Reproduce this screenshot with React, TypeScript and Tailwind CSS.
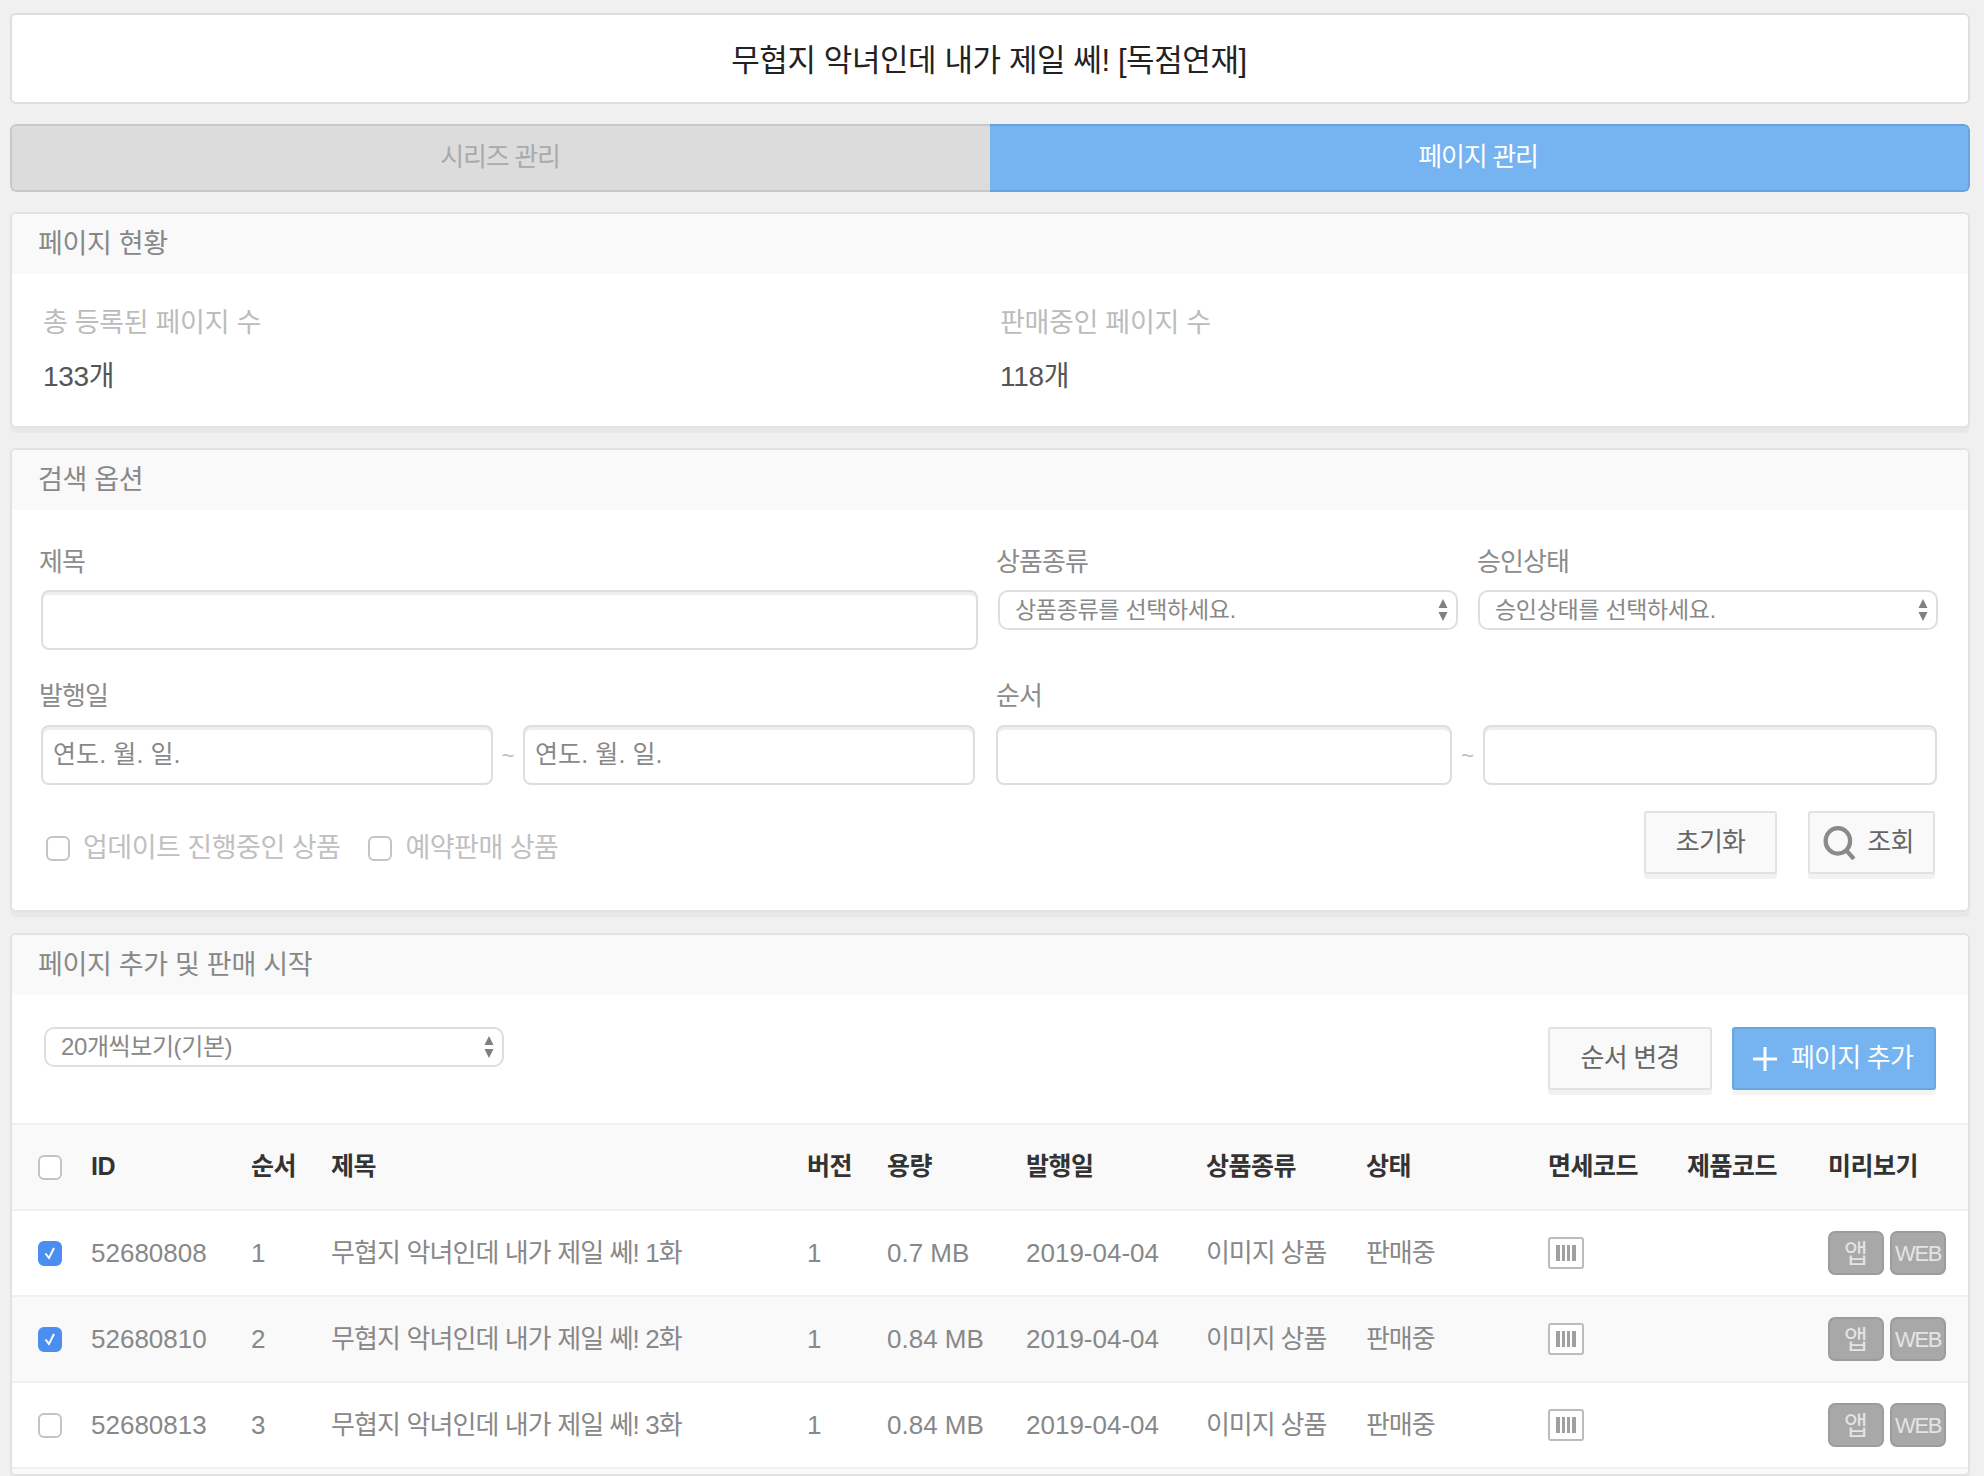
const rows = [
  { id: "52680808", order: "1", title: "무협지 악녀인데 내가 제일 쎄! 1화", size: "0.7 MB", checked: true },
  { id: "52680810", order: "2", title: "무협지 악녀인데 내가 제일 쎄! 2화", size: "0.84 MB", checked: true },
  { id: "52680813", order: "3", title: "무협지 악녀인데 내가 제일 쎄! 3화", size: "0.84 MB", checked: false },
];

const columns = ["ID", "순서", "제목", "버전", "용량", "발행일", "상품종류", "상태", "면세코드", "제품코드", "미리보기"];

function Checkbox({ checked = false, className = "" }: { checked?: boolean; className?: string }) {
  return (
    <span
      className={`flex h-[25px] w-[24px] shrink-0 items-center justify-center rounded-[6px] border-2 ${
        checked ? "border-[#4a8ef0] bg-[#4a8ef0]" : "border-[#c4c4c4] bg-white"
      } ${className}`}
    >
      {checked && (
        <svg viewBox="0 0 16 16" className="h-[16px] w-[16px]" fill="none" stroke="white" strokeWidth="2">
          <path d="M3.5 8.5 L7 13 L12 3" />
        </svg>
      )}
    </span>
  );
}

function Arrows() {
  return (
    <svg viewBox="0 0 10 24" className="absolute top-[8px] right-[9px] h-[24px] w-[12px]" fill="#808080">
      <path d="M5 1 L9.5 10 H0.5 Z" />
      <path d="M5 23 L9.5 14 H0.5 Z" />
    </svg>
  );
}

function SelectBox({ label, className = "", textClass = "text-[23px] tracking-[-0.3px]" }: { label: string; className?: string; textClass?: string }) {
  return (
    <div className={`relative ${className}`}>
      <select className={`h-[40px] w-full appearance-none rounded-[10px] border-2 border-[#dedede] bg-white pl-[15px] leading-[34px] text-[#888888] outline-none ${textClass}`}>
        <option>{label}</option>
      </select>
      <Arrows />
    </div>
  );
}

function TextInput({ value = "", className = "" }: { value?: string; className?: string }) {
  return (
    <input
      readOnly
      value={value}
      className={`h-[60px] rounded-[8px] border-2 border-[#dedede] bg-white px-[10px] pb-[6px] text-[25px] tracking-[0.1px] text-[#888888] shadow-[inset_0_3px_0_#eeeeee] outline-none ${className}`}
    />
  );
}

function Tilde({ className = "" }: { className?: string }) {
  return <span className={`flex items-center justify-center text-[22px] text-[#bbbbbb] ${className}`}>~</span>;
}

function Panel({ title, children, className = "" }: { title: string; children: React.ReactNode; className?: string }) {
  return (
    <section className={`rounded-[6px] border-2 border-[#e2e2e2] bg-white shadow-[0_5px_0_#e8e8e8] ${className}`}>
      <h2 className="flex h-[60px] items-center rounded-t-[6px] bg-[#f9f9f9] pt-[1px] pl-[26px] text-[27px] tracking-[-0.3px] text-[#888888]">
        {title}
      </h2>
      {children}
    </section>
  );
}

function Chip({ children, textClass }: { children: React.ReactNode; textClass: string }) {
  return (
    <span className={`flex h-[44px] w-[56px] items-center justify-center rounded-[7px] border-2 border-[#9c9c9c] bg-[#a8a8a8] text-[#e4e4e4] ${textClass}`}>
      {children}
    </span>
  );
}

function BarcodeIcon() {
  return (
    <span className="flex h-[32px] w-[36px] items-center justify-center rounded-[3px] border-2 border-[#bcbcbc] bg-white">
      <svg viewBox="0 0 20 16" className="h-[16px] w-[20px]" fill="#a0a0a0">
        <rect x="0" width="4" height="16" />
        <rect x="6" width="3" height="16" />
        <rect x="11" width="3" height="16" />
        <rect x="16" width="4" height="16" />
      </svg>
    </span>
  );
}

const fieldLabel = "h-[40px] pt-[1px] text-[26px] leading-[40px] tracking-[-0.9px] text-[#8c8c8c]";
const statLabel = "h-[40px] pt-[1px] text-[27px] leading-[40px] tracking-[-0.3px] text-[#bcbcbc]";
const statValue = "mt-[15px] h-[40px] text-[28px] leading-[40px] tracking-[-0.3px] text-[#555555]";

export default function App() {
  return (
    <div className="flex h-screen flex-col overflow-hidden bg-[#f0f0f0] pt-[13px] pr-[14px] pl-[10px] font-['Liberation_Sans','Noto_Sans_CJK_KR',sans-serif]">
      <header className="flex h-[91px] shrink-0 items-center justify-center rounded-[6px] border-2 border-[#dedede] bg-white pt-[5px] pr-[2px] text-[31px] tracking-[-0.4px] text-[#222222]">
        무협지 악녀인데 내가 제일 쎄! [독점연재]
      </header>

      {/* Tabs */}
      <nav className="mt-[20px] flex h-[68px] shrink-0 overflow-hidden rounded-[6px] text-[26px] tracking-[-1.2px]">
        <div className="flex w-[980px] items-center justify-center rounded-l-[6px] border-2 border-r-0 border-[#c8c8c8] bg-[#dcdcdc] pr-[2px] pb-[2px] text-[#aaaaaa]">
          시리즈 관리
        </div>
        <div className="flex flex-1 items-center justify-center rounded-r-[6px] border-2 border-l-0 border-[#68a3e0] bg-[#76b3f1] pr-[2px] pb-[2px] text-white">
          페이지 관리
        </div>
      </nav>

      {/* 페이지 현황 */}
      <Panel title="페이지 현황" className="mt-[20px] h-[216px] shrink-0">
        <div className="flex pt-[28px] pl-[31px]">
          <div className="w-[957px]">
            <div className={statLabel}>총 등록된 페이지 수</div>
            <div className={statValue}>133개</div>
          </div>
          <div>
            <div className={statLabel}>판매중인 페이지 수</div>
            <div className={statValue}>118개</div>
          </div>
        </div>
      </Panel>

      {/* 검색 옵션 */}
      <Panel title="검색 옵션" className="mt-[20px] h-[464px] shrink-0">
        <div className="pt-[31px] pr-[31px] pl-[29px]">
          <div className="flex gap-[18px]">
            <div className="w-[937px]">
              <div className={`-ml-[2px] ${fieldLabel}`}>제목</div>
              <TextInput className="mt-[9px] w-full" />
            </div>
            <div className="flex flex-1 gap-[21px]">
              <div className="flex-1">
                <div className={fieldLabel}>상품종류</div>
                <SelectBox label="상품종류를 선택하세요." className="mt-[9px] mr-[-2px] ml-[2px]" />
              </div>
              <div className="flex-1">
                <div className={fieldLabel}>승인상태</div>
                <SelectBox label="승인상태를 선택하세요." className="mt-[9px] mr-[-1px] ml-[1px]" />
              </div>
            </div>
          </div>

          <div className="mt-[25px] flex gap-[21px]">
            <div className="w-[934px]">
              <div className={`-ml-[2px] ${fieldLabel}`}>발행일</div>
              <div className="mt-[10px] flex">
                <TextInput value="연도. 월. 일." className="w-[452px]" />
                <Tilde className="w-[30px]" />
                <TextInput value="연도. 월. 일." className="w-[452px]" />
              </div>
            </div>
            <div className="flex-1">
              <div className={fieldLabel}>순서</div>
              <div className="mt-[10px] flex">
                <TextInput className="w-[456px]" />
                <Tilde className="w-[31px]" />
                <TextInput className="w-[454px]" />
              </div>
            </div>
          </div>

          <div className="mt-[26px] flex items-start justify-between">
            <div className="mt-[17px] ml-[5px] flex items-center text-[27px] tracking-[-0.5px] text-[#c0c0c0]">
              <Checkbox className="mt-[1px]" />
              <span className="ml-[13px]">업데이트 진행중인 상품</span>
              <Checkbox className="mt-[1px] ml-[28px]" />
              <span className="ml-[13px]">예약판매 상품</span>
            </div>
            <div className="mr-[2px] flex gap-[31px] text-[26px] tracking-[-0.7px] text-[#666666]">
              <button className="h-[63px] w-[133px] rounded-[3px] border-2 border-[#e2e2e2] bg-[#f9f9f9] shadow-[0_5px_0_#f2f2f2]">
                초기화
              </button>
              <button className="flex h-[63px] w-[127px] items-center justify-center gap-[10px] rounded-[3px] border-2 border-[#e2e2e2] bg-[#f9f9f9] pr-[6px] shadow-[0_5px_0_#f2f2f2]">
                <svg viewBox="0 0 32 32" className="h-[34px] w-[34px]" fill="none" stroke="#8a8a8a" strokeWidth="4">
                  <ellipse cx="14" cy="14" rx="11.5" ry="12" />
                  <path d="M22 23 L29 31" />
                </svg>
                조회
              </button>
            </div>
          </div>
        </div>
      </Panel>

      {/* 페이지 추가 및 판매 시작 */}
      <Panel title="페이지 추가 및 판매 시작" className="mt-[21px] min-h-0 flex-1 overflow-hidden">
        <div className="flex h-[128px] items-start justify-between pt-[32px] pr-[32px] pl-[32px]">
          <SelectBox label="20개씩보기(기본)" className="w-[460px]" textClass="text-[24px] tracking-[-0.4px]" />
          <div className="flex gap-[20px] text-[26px] tracking-[-0.8px]">
            <button className="h-[63px] w-[164px] rounded-[3px] border-2 border-[#e2e2e2] bg-[#f9f9f9] text-[#666666] shadow-[0_5px_0_#f2f2f2]">
              순서 변경
            </button>
            <button className="flex h-[63px] w-[204px] items-center justify-center gap-[14px] rounded-[3px] border-2 border-[#6aa6e4] bg-[#76b3f1] pr-[2px] text-white shadow-[0_5px_0_#f4f4f4]">
              <svg viewBox="0 0 24 24" className="h-[24px] w-[24px]" fill="none" stroke="white" strokeWidth="3">
                <path d="M12 0 V24 M0 12 H24" />
              </svg>
              페이지 추가
            </button>
          </div>
        </div>

        <table className="w-full table-fixed border-collapse text-left text-[26px] text-[#888888]">
          <colgroup>
            <col className="w-[79px]" />
            <col className="w-[160px]" />
            <col className="w-[80px]" />
            <col className="w-[476px]" />
            <col className="w-[80px]" />
            <col className="w-[139px]" />
            <col className="w-[180px]" />
            <col className="w-[160px]" />
            <col className="w-[182px]" />
            <col className="w-[139px]" />
            <col className="w-[141px]" />
            <col />
          </colgroup>
          <thead>
            <tr className="h-[86px] border-y-2 border-[#f0f0f0] bg-[#f9f9f9]">
              <th className="pl-[26px]">
                <Checkbox />
              </th>
              {columns.map((name) => (
                <th key={name} className="text-[25px] font-bold tracking-[-0.5px] whitespace-nowrap text-[#333333]">
                  {name}
                </th>
              ))}
            </tr>
          </thead>
          <tbody>
            {rows.map((row, i) => (
              <tr key={row.id} className={`h-[86px] border-b-2 border-[#f0f0f0] ${i % 2 === 1 ? "bg-[#f9f9f9]" : "bg-white"}`}>
                <td className="pl-[26px]">
                  <Checkbox checked={row.checked} />
                </td>
                <td>{row.id}</td>
                <td>{row.order}</td>
                <td className="tracking-[-0.9px]">{row.title}</td>
                <td>1</td>
                <td>{row.size}</td>
                <td>2019-04-04</td>
                <td className="tracking-[-1.1px]">이미지 상품</td>
                <td className="tracking-[-1.1px]">판매중</td>
                <td>
                  <BarcodeIcon />
                </td>
                <td />
                <td>
                  <div className="flex gap-[6px]">
                    <Chip textClass="pt-[2px] text-[26px]">앱</Chip>
                    <Chip textClass="text-[22px] tracking-[-1.4px]">WEB</Chip>
                  </div>
                </td>
              </tr>
            ))}
            <tr className="h-[86px] bg-[#f9f9f9]">
              <td colSpan={12} />
            </tr>
          </tbody>
        </table>
      </Panel>
    </div>
  );
}
